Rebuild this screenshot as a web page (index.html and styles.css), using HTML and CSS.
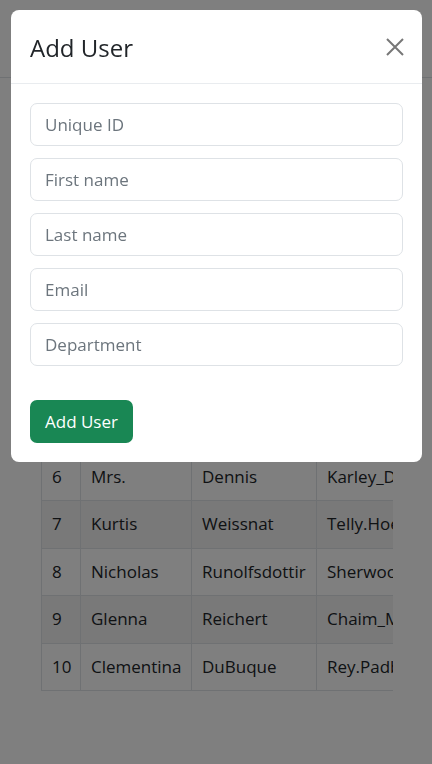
FILE: index.html
```html
<!DOCTYPE html>
<html lang="en">
<head>
<meta charset="utf-8">
<title>Users</title>
<link rel="stylesheet" href="styles.css">
</head>
<body>
<header class="topbar"></header>
<main class="page">
  <div class="table-wrap">
    <table class="users">
      <colgroup>
        <col class="c-id"><col class="c-first"><col class="c-last"><col class="c-email">
      </colgroup>
      <tbody>
        <tr><td>6</td><td>Mrs.</td><td>Dennis</td><td>Karley_Dennis@yahoo.com</td></tr>
        <tr class="striped"><td>7</td><td>Kurtis</td><td>Weissnat</td><td>Telly.Hoeger@hotmail.com</td></tr>
        <tr><td>8</td><td>Nicholas</td><td>Runolfsdottir</td><td>Sherwood@rosamond.me</td></tr>
        <tr class="striped"><td>9</td><td>Glenna</td><td>Reichert</td><td>Chaim_McDermott@dana.io</td></tr>
        <tr><td>10</td><td>Clementina</td><td>DuBuque</td><td>Rey.Padberg@karina.biz</td></tr>
      </tbody>
    </table>
  </div>
</main>

<div class="backdrop"></div>

<div class="modal" role="dialog" aria-labelledby="addUserTitle">
  <div class="modal-content">
    <div class="modal-header">
      <h5 class="modal-title" id="addUserTitle">Add User</h5>
      <button type="button" class="btn-close" aria-label="Close">
        <svg width="18" height="18" viewBox="0 0 18 18" aria-hidden="true">
          <path d="M1 1 L17 17 M17 1 L1 17" stroke="currentColor" stroke-width="2" fill="none"/>
        </svg>
      </button>
    </div>
    <form class="modal-body">
      <input class="form-control" type="text" placeholder="Unique ID">
      <input class="form-control" type="text" placeholder="First name">
      <input class="form-control" type="text" placeholder="Last name">
      <input class="form-control" type="email" placeholder="Email">
      <input class="form-control" type="text" placeholder="Department">
      <button type="submit" class="btn-success">Add User</button>
    </form>
  </div>
</div>
</body>
</html>
```

FILE: styles.css
```css
* { box-sizing: border-box; }

html, body {
  margin: 0;
  padding: 0;
  background: #fff;
  color: #212529;
  font-family: "Open Sans", "Noto Sans", sans-serif;
  font-size: 17px;
}

.topbar {
  height: 78px;
  border-bottom: 1px solid #dee2e6;
}

.page { padding: 374.5px 39px 0 41px; }

.table-wrap { overflow: hidden; }

.users {
  border-collapse: collapse;
  table-layout: fixed;
  width: 525px;
}

.c-id { width: 39px; }
.c-first { width: 111px; }
.c-last { width: 125px; }
.c-email { width: 250px; }

.users td {
  border: 1px solid #dee2e6;
  padding: 10px 10px;
  line-height: 26.5px;
  text-align: left;
  white-space: nowrap;
  overflow: hidden;
}

.users tr.striped td { background: rgba(0, 0, 0, 0.05); }

.backdrop {
  position: fixed;
  inset: 0;
  background: rgba(0, 0, 0, 0.5);
}

.modal {
  position: absolute;
  top: 10px;
  left: 11px;
  width: 411px;
}

.modal-content {
  background: #fff;
  border-radius: 8px;
  overflow: hidden;
}

.modal-header {
  height: 74px;
  border-bottom: 1px solid #e9ecef;
  display: flex;
  align-items: center;
  justify-content: space-between;
  padding: 2px 18px 0 19px;
}

.modal-title {
  margin: 0;
  font-size: 24px;
  font-weight: 500;
  line-height: 30px;
  color: #212529;
}

.btn-close {
  border: 0;
  background: none;
  padding: 0;
  width: 18px;
  height: 18px;
  color: #777;
  display: flex;
  margin-top: -2px;
}

.modal-body {
  padding: 19px 19px 19px;
  display: flex;
  flex-direction: column;
  align-items: flex-start;
}

.form-control {
  display: block;
  width: 100%;
  height: 43px;
  margin: 0 0 12px;
  padding: 0 14px;
  border: 1px solid #dee2e6;
  border-radius: 7px;
  font: inherit;
  font-size: 17px;
  color: #212529;
  background: #fff;
}

.form-control::placeholder { color: #6c757d; }

.btn-success {
  margin-top: 22px;
  height: 43px;
  padding: 0 15px;
  border: 0;
  border-radius: 7px;
  background: #198754;
  color: #fff;
  font: inherit;
  font-size: 17px;
}
```
